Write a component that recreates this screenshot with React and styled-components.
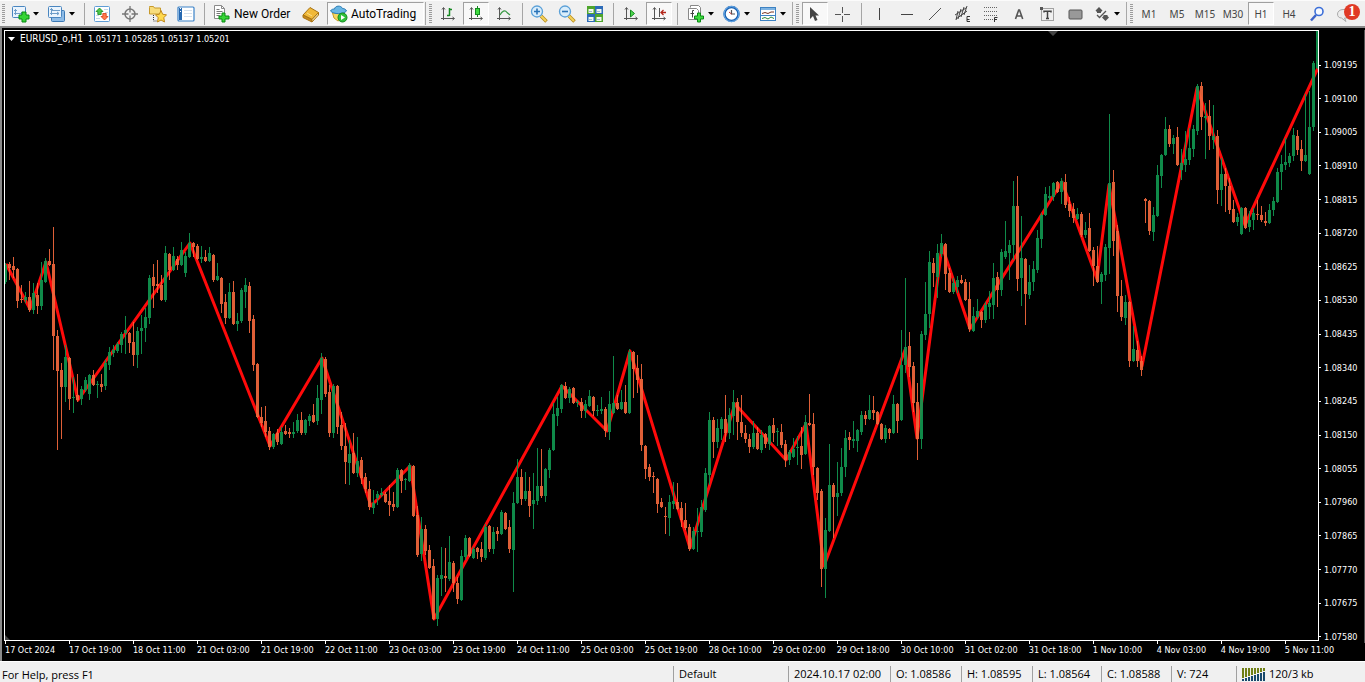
import React from 'react'
import styled, { createGlobalStyle, css } from 'styled-components'


const GlobalStyle = createGlobalStyle`
* {
  box-sizing: border-box;
}

body {
  margin: 0;
  background-color: #f0f0f0;
  font-family: "Open Sans", "Noto Sans", sans-serif;
  color: #000;
}
`

// one candle per entry: direction, then high, body top, body bottom, low
const candleData = `
g263 265 282 284,o262 264 268 280,o257 266 270 278,o268 269 301 308,o285 299 300 303,g292 297 300 303,o281 297 310 312,g283 293 310 314,
o283 295 306 314,g262 280 306 310,g258 261 282 283,o249 261 265 266,o227 264 336 370,o330 336 371 450,o363 370 387 439,g345 357 387 402,
o357 358 399 410,g377 397 398 413,o374 395 400 402,g386 389 399 405,g377 380 390 392,g374 375 394 400,o370 375 385 386,g381 384 385 398,
o374 384 387 392,g360 363 386 390,g347 352 365 370,g345 350 353 357,g342 344 351 353,g332 334 345 353,g316 330 333 354,o332 333 343 353,
o322 342 355 366,g327 331 355 368,g315 328 331 354,g308 317 328 342,g275 278 318 324,o264 277 286 308,o260 284 286 293,o275 285 300 301,
g246 253 300 302,o253 254 270 280,g247 256 270 271,o256 259 265 270,g242 250 265 266,g252 256 273 277,g233 243 257 258,o242 243 247 257,
o244 246 259 260,g246 257 259 263,o250 257 261 262,g247 253 261 262,o254 255 280 282,g263 276 280 281,o277 278 304 313,o294 302 318 324,
g283 292 318 319,o281 292 324 325,g313 321 324 331,g288 290 321 323,g278 285 292 308,o282 286 321 333,o315 319 365 371,o363 364 417 418,
o407 417 423 427,o406 421 432 437,o427 431 447 450,g433 434 447 449,o429 433 442 445,g427 432 444 445,o425 431 434 435,o428 432 434 438,
g422 432 434 438,g414 420 431 433,o412 420 433 435,g419 420 433 435,g414 416 421 426,o404 415 422 423,g385 398 421 425,g353 358 400 414,
o357 359 394 397,o385 392 433 437,g384 386 433 438,o385 386 427 434,o412 425 446 450,o423 446 462 484,g440 454 463 485,o433 453 473 474,
g437 461 473 477,o457 460 478 484,o473 477 489 493,o481 489 507 510,g490 503 508 514,g491 494 498 505,g488 493 495 497,o492 494 502 503,
o485 501 505 516,o492 504 507 511,g468 470 507 508,o469 470 481 493,g478 479 480 490,g463 465 481 482,o465 466 516 517,o506 515 555 557,
g517 529 554 561,o525 529 551 555,o545 550 568 569,o559 566 619 620,g575 578 619 626,g547 575 579 596,o548 576 578 592,g536 562 579 581,
o561 563 583 592,o577 583 599 604,g550 556 600 601,g535 538 557 560,o537 538 556 557,g547 549 558 559,o547 548 552 559,o542 549 557 562,
g524 527 558 560,o525 526 549 552,g527 532 549 554,o527 531 534 541,g510 512 534 535,o512 513 529 530,o520 527 549 553,g492 503 550 592,
g459 477 503 504,o469 477 499 505,g472 491 499 501,o477 491 506 517,g473 500 504 529,g448 486 501 505,o449 486 496 498,g468 469 496 502,
g448 450 470 478,g403 414 450 451,g397 408 416 426,g384 385 409 413,o382 386 398 399,g387 389 398 403,o387 388 403 404,g400 402 403 407,
o398 402 411 418,g400 404 411 418,g390 396 406 407,o396 397 411 416,g405 410 411 416,g397 409 411 414,o407 409 431 437,g391 404 432 440,
g356 403 413 414,o395 403 409 410,g390 402 409 410,o385 402 413 414,g349 352 413 414,o351 352 369 398,o355 368 380 393,o364 379 445 451,
o445 446 469 479,o464 467 477 481,o472 476 477 493,o478 479 504 513,o498 502 507 508,o507 516 517 534,g495 502 518 536,g482 501 504 509,
o483 502 509 510,o502 508 520 527,o503 520 528 530,o524 527 549 551,g527 531 549 550,g508 531 532 552,g500 507 532 537,g468 473 510 512,
g412 420 475 485,o417 420 442 458,g419 428 442 448,g417 419 429 440,o395 419 433 442,g408 415 433 439,g390 402 416 435,o398 402 422 440,
o395 422 433 437,o425 433 439 443,o434 439 447 453,g421 433 447 449,o427 433 449 450,g430 435 450 453,o433 434 444 448,g425 426 444 450,
o418 425 433 442,g428 431 432 446,o424 432 445 448,o440 444 460 467,g450 452 460 465,g438 449 457 458,g436 447 448 465,o427 446 455 469,
g415 422 454 455,o394 423 425 426,o413 424 467 475,o467 468 493 500,o489 491 569 587,g518 530 569 598,g444 485 531 532,o483 485 497 538,
g462 493 497 516,g448 467 493 496,g430 438 467 477,o432 437 440 450,g421 439 441 448,g429 430 441 452,g411 415 432 435,o411 415 419 425,
g395 410 419 420,o396 410 413 420,o411 412 424 425,o423 424 439 440,g425 428 439 443,o428 429 433 439,g395 404 433 434,o403 404 421 433,
g330 365 420 421,g278 347 365 373,o332 346 367 377,o362 366 403 412,o383 402 439 460,g331 334 439 449,g282 314 335 340,g251 262 314 328,
o258 263 273 287,g244 253 277 298,g234 243 254 257,o243 244 274 290,o268 273 292 293,g278 283 292 294,g276 280 287 293,o275 280 283 284,
o279 282 300 301,o282 299 329 332,g307 316 331 332,g299 311 317 319,o311 312 320 328,g302 305 320 323,g291 303 307 319,g263 278 305 319,
o272 277 290 307,g249 252 290 296,g221 251 257 259,g240 245 253 280,g181 206 245 260,o176 206 279 291,g216 258 278 306,o258 259 294 325,
g265 282 295 299,g261 269 282 291,g230 238 270 273,g213 215 239 248,g187 194 215 216,g186 196 198 200,g182 183 197 201,o181 182 192 193,
g178 181 192 204,o174 182 205 208,o197 204 211 217,o203 209 218 223,g208 214 219 220,o212 214 235 237,g222 230 235 238,o213 228 251 252,
o247 250 266 286,o246 266 282 283,g272 274 282 304,g244 247 275 281,g114 183 248 274,o170 182 241 256,o225 231 296 312,o280 296 317 321,
g295 302 318 325,o301 302 361 367,g326 349 361 362,o341 350 361 367,o356 361 370 376,o198 199 201 223,o200 201 231 235,g207 215 232 241,
g165 175 216 217,g154 155 176 188,g117 129 155 156,o125 129 144 147,g135 138 144 154,o127 137 165 166,g149 163 170 180,g131 159 165 172,
g128 148 160 165,g125 129 149 157,g84 86 131 135,o82 86 117 130,g103 116 118 159,o100 116 136 150,g105 136 140 149,o130 136 190 204,
g158 174 190 206,o168 174 186 212,o178 186 210 214,o200 209 222 223,g213 217 222 226,g207 208 234 235,o207 208 228 229,g211 220 227 232,
g208 213 220 230,o200 214 215 220,o206 215 220 222,o212 221 223 226,g204 210 223 224,g197 201 210 216,g168 172 202 203,g155 164 172 190,
g138 162 165 170,g153 156 163 167,g128 135 156 161,o130 136 150 155,o140 149 161 171,g94 155 161 162,g91 127 174 175,g61 63 127 131,
g20 20 68 69`

const candles = candleData.trim().split(/,\s*/).map((entry, index) => {
  const [high, top, bottom, low] = entry.slice(1).split(' ').map(Number)
  return { x: 5 + index * 4, up: entry[0] === 'g', high, top, bottom, low }
})

const zigzag = '6,264 30,309 46,262 78,400 190,243 270,446 322,358 371,506 410,466 434,619 562,386 607,431 630,351 690,548 735,404 786,460 806,424 824,566 905,350 917,438 942,246 970,329 1062,182 1097,279 1109,185 1142,366 1197,88 1245,225 1318,68'

const prices = Array.from({ length: 18 }, (_, index) => ((109195 - index * 95) / 100000).toFixed(5))
const times = [
  '17 Oct 2024', '17 Oct 19:00', '18 Oct 11:00', '21 Oct 03:00', '21 Oct 19:00', '22 Oct 11:00', '23 Oct 03:00',
  '23 Oct 19:00', '24 Oct 11:00', '25 Oct 03:00', '25 Oct 19:00', '28 Oct 10:00', '29 Oct 02:00', '29 Oct 18:00',
  '30 Oct 10:00', '31 Oct 02:00', '31 Oct 18:00', '1 Nov 10:00', '4 Nov 03:00', '4 Nov 19:00', '5 Nov 11:00',
]


const StyledApp = styled.div`
display: flex;
flex-direction: column;
height: 100vh;
overflow: hidden;
`

/* toolbar */
const StyledToolbar = styled.header`
display: flex;
flex: none;
height: 28px;
padding-top: 1px;
background-color: #f0f0f0;
border-top: 1px solid #fbfbfb;
border-bottom: 2px solid #8a8a8a;
white-space: nowrap;
`
const StyledGrip = styled.div`
flex: none;
width: ${({ $first }) => $first ? '8px' : '10px'};
margin-bottom: 1px;
padding: 2px 0 2px ${({ $first }) => $first ? '2px' : '3px'};
${({ $first }) => !$first && css`
  margin-left: 1px;
  width: 9px;
  border-left: 1px solid #a8a8a8;
`}

&::before {
  content: '';
  display: block;
  width: 3px;
  height: 100%;
  background: repeating-linear-gradient(#9c9c9c 0 1px, #f0f0f0 1px 2px);
}
`
const StyledDivider = styled.div`
flex: none;
width: 1px;
margin: 1px ${({ $after }) => $after || '3px'} 1px 4px;
background-color: #a5a5a5;
`
const StyledButton = styled.button`
display: flex;
flex: none;
align-items: center;
justify-content: center;
width: 26px;
height: 23px;
margin: 0 1px;
padding: 0;
border: 1px solid transparent;
background: none;
color: #444;
font: 10px "Noto Sans", sans-serif;

${({ $pressed }) => $pressed && css`
  border-color: #a0a0a0 #fff #fff #a0a0a0;
  background-color: #f8f8f8;
`}
${({ $split }) => $split && css`
  justify-content: flex-start;
  gap: 3px;
  width: 36px;
  margin: 0;
  padding-left: 3px;
`}
`
const StyledTextButton = styled(StyledButton)`
justify-content: flex-start;
gap: 3px;
width: ${({ $width }) => $width};
margin: 0 0 0 ${({ $left }) => $left || '0'};
padding-left: ${({ $pad }) => $pad};
color: #000;
font: 12px Roboto, "Open Sans", sans-serif;
`
const StyledIcon = styled.svg`
flex: none;
display: block;
width: ${({ $wide }) => $wide ? '18px' : '16px'};
height: ${({ $wide }) => $wide ? '18px' : '16px'};
`
const StyledChatButton = styled(StyledButton)`
position: relative;
align-items: flex-end;
justify-content: flex-start;
width: 30px;
margin-left: auto;
`
const StyledBadge = styled.span`
position: absolute;
top: 1px;
right: 3px;
width: 16px;
height: 16px;
border-radius: 8px;
background-color: #e03a26;
color: #fff;
font: bold 14px/16px "Liberation Serif", serif;
text-align: center;
`

/* chart */
const StyledChart = styled.main`
display: grid;
flex: 1;
grid-template-columns: 1fr 46px;
grid-template-rows: 1fr 20px;
min-height: 0;
padding: 2px 0 0 2px;
border-left: 2px solid #8a8a8a;
background-color: #000;
color: #fff;
font: 9px/12px "DejaVu Sans Condensed", "DejaVu Sans", sans-serif;
white-space: nowrap;
`
const StyledPlot = styled.section`
position: relative;
min-height: 0;
border: 1px solid #fff;
`
const StyledPlotSvg = styled.svg`
display: block;
width: 100%;
height: 100%;
`
const StyledTitle = styled.div`
position: absolute;
top: 2px;
left: 3px;
display: flex;
align-items: center;
gap: 5px;
white-space: pre;
`
const StyledSymbol = styled.span`
font-size: 10px;
`
const StyledTitleArrow = styled.svg`
width: 7px;
height: 4px;
`
const StyledPriceAxis = styled.ol`
display: flex;
flex-direction: column;
justify-content: space-between;
margin: 0 0 -2px;
padding: 29px 0 0;
border-right: 1px solid #555;
list-style: none;
`
const StyledPrice = styled.li`
display: flex;
align-items: center;
gap: 3px;

&::before {
  content: '';
  width: 2px;
  height: 1px;
  background-color: #fff;
}
`
const StyledTimeAxis = styled.ol`
display: flex;
margin: 0;
padding: 0 1px;
list-style: none;
`
const StyledTime = styled.li`
flex: none;
width: calc(100% * 64 / 1313);

&::before {
  content: '';
  display: block;
  width: 1px;
  height: 3px;
  background-color: #fff;
}
`

/* status bar */
const StyledStatusBar = styled.footer`
display: flex;
flex: none;
height: 21px;
padding-top: 4px;
border-top: 1px solid #fff;
background-color: #f0f0f0;
font-size: 11px;
line-height: 18px;
white-space: nowrap;
`
const StyledStatus = styled.div`
display: flex;
flex: none;
align-items: center;
gap: 3px;
width: ${({ $width }) => $width};
padding-left: 5px;
border-left: 1px solid #a0a0a0;
`
const StyledHelp = styled.div`
flex: 1;
padding-left: 2px;
`
const StyledSignal = styled.svg`
width: 24px;
height: 13px;
`


const Icon = ({ children, wide }) => (
  <StyledIcon $wide={wide} viewBox={wide ? '0 0 18 18' : '0 0 16 16'} fill="none" aria-hidden="true">
    {children}
  </StyledIcon>
)
const DropArrow = () => (
  <svg width="7" height="4" viewBox="0 0 7 4" aria-hidden="true"><path d="M0 0h6L3 3.500z" fill="#000" /></svg>
)
const Plus = ({ x, y }) => (
  <path
    transform={`translate(${x} ${y})`}
    d="M3.500.5h3v3h3v3h-3v3h-3v-3h-3v-3h3z"
    fill="#3fdc3f"
    stroke="#0a8a14"
  />
)
const Axes = () => (
  <path d="M3.500 2v12M1 12.500h13M2 3.500l1.500-2 1.500 2M12.500 11l2 1.500-2 1.500" stroke="#555" />
)

const NewChartIcon = () => (
  <Icon wide>
    <rect x=".5" y="1.500" width="13" height="11" rx="1" fill="#eaf4fd" stroke="#4a86c0" />
    <path d="M3.500 4v6M2 5.500h3M2 8.500h9M9 7l2 1.500L9 10" stroke="#6d9cc8" />
    <path d="M10 7h4v3h3v4h-3v3h-4v-3H7v-4h3z" fill="#35d435" stroke="#0a8a14" />
  </Icon>
)
const ProfilesIcon = () => (
  <Icon wide>
    <rect x="3.500" y="5.500" width="13" height="11" rx="1" fill="#8dbbe6" stroke="#3b78b4" />
    <rect x=".5" y="1.500" width="13" height="11" rx="1" fill="#eaf4fd" stroke="#4a86c0" />
    <path d="M3.500 3v7M2 4.500h3M2 8.500h9M9 7l2 1.500L9 10M4 5.500h8" stroke="#6d9cc8" />
  </Icon>
)
const MarketWatchIcon = () => (
  <Icon>
    <rect x=".5" y=".5" width="15" height="15" rx="1" fill="#fff" stroke="#5f9dd6" />
    <path d="M10 3.500h4M11 6.500h3M2 9.500h3M2 12.500h4" stroke="#c5d7e8" />
    <path d="M5.500 2l3.500 3.500H7.200v3H3.800v-3H2z" fill="#4cc84c" stroke="#15861c" strokeWidth=".8" />
    <path d="M10.500 14L7 10.500h1.800v-3h3.400v3H14z" fill="#ff7a4a" stroke="#d63a14" strokeWidth=".8" />
  </Icon>
)
const DataWindowIcon = () => (
  <Icon>
    <circle cx="8" cy="8" r="5" stroke="#777" strokeWidth="1.500" />
    <path d="M8 0v6.500M8 9.500V16M0 8h6.500M9.500 8H16" stroke="#777" strokeWidth="1.300" />
  </Icon>
)
const NavigatorIcon = () => (
  <Icon wide>
    <path d="M.5 2.500v-1h4l1 1.500h6v6h-11z" fill="#f8dd7c" stroke="#c79a2c" />
    <path d="M4.500 10v6h3" stroke="#333" strokeDasharray="1 1" />
    <path d="M12 5.500l1.700 3.800 3.800.5-2.700 2.900.7 4.300-3.500-2-3.500 2 .7-4.300L6.500 9.800l3.800-.5z" fill="#ffd94d" stroke="#c28a1c" />
  </Icon>
)
const TerminalIcon = () => (
  <Icon wide>
    <rect x="1" y="2" width="16" height="14" rx="1" fill="#fff" stroke="#3a82c8" strokeWidth="1.200" />
    <path d="M2 3h3v12H2z" fill="#2668b0" />
    <path d="M3 3.500h1M3 6.500h1" stroke="#fff" />
    <path d="M7 5.500h8M7 8.500h8M7 11.500h8" stroke="#d5e1ee" />
  </Icon>
)
const OrderIcon = () => (
  <Icon wide>
    <path d="M1.500.5h7l3 3v10h-10z" fill="#fff" stroke="#8a8a8a" />
    <path d="M8.500.5v3h3" stroke="#8a8a8a" />
    <path d="M3.500 4.500h3M3.500 6.500h6M3.500 8.500h4M3.500 10.500h3" stroke="#777" />
    <path d="M9 8h3v3h4v3h-4v3H9v-3H6v-3h3z" fill="#35d435" stroke="#0a8a14" />
  </Icon>
)
const EditorIcon = () => (
  <Icon wide>
    <path d="M1 10l7-7.500 8.500 5-6.500 7z" fill="#f0b93a" stroke="#a87312" />
    <path d="M1 10l9 4.500v2.500l-9-4.500z" fill="#c98a1c" stroke="#a87312" />
    <path d="M10 14.500l6.500-7v2.500l-6.500 7z" fill="#f7e3a4" stroke="#a87312" />
    <path d="M5 8l5 3" stroke="#fbe08a" />
  </Icon>
)
const AutoTradingIcon = () => (
  <Icon wide>
    <path d="M2.500 8h12l-1.500 5-5 3-4-3z" fill="#f6d65e" stroke="#c59a25" />
    <path d="M.5 6c1-2 3-2 4-2 .5-3.500 6.500-4 8-.5 2 0 3.500 1 4 2.500-3 3.500-13 3.500-16 0z" fill="#69b6e4" stroke="#2c7db5" />
    <circle cx="12.500" cy="12.500" r="4.500" fill="#2fbf3a" stroke="#128a1e" />
    <path d="M11 10v5l4-2.500z" fill="#fff" />
  </Icon>
)
const BarsIcon = () => (
  <Icon><Axes /><path d="M9.500 2v8M7 9.500h2.500M9.500 3.500H12" stroke="#168a22" strokeWidth="1.500" /></Icon>
)
const CandlesIcon = () => (
  <Icon><Axes /><path d="M9.500 0v11" stroke="#168a22" /><rect x="7.500" y="2.500" width="4" height="6" fill="#3fdc3f" stroke="#168a22" /></Icon>
)
const LineIcon = () => (
  <Icon><Axes /><path d="M4 9c2-4 5-5.500 7-2.500L14 9" stroke="#3a9a45" strokeWidth="1.200" /></Icon>
)
const ZoomIcon = ({ plus }) => (
  <Icon wide>
    <path d="M11 11l5.500 5.500" stroke="#b88c1c" strokeWidth="3.500" />
    <path d="M11 11l5 5" stroke="#f5d25a" strokeWidth="2" />
    <circle cx="7" cy="6.500" r="5.500" fill="#d9edfb" stroke="#5aa0d8" strokeWidth="1.300" />
    <path d={plus ? 'M4 6.500h6M7 3.500v6' : 'M4 6.500h6'} stroke="#2b74b8" strokeWidth="1.600" />
  </Icon>
)
const TileIcon = () => (
  <Icon>
    <path d="M0 0h8v8H0zM8 8h8v8H8z" fill="#4ea52c" />
    <path d="M8 0h8v8H8zM0 8h8v8H0z" fill="#2d6bb8" />
    <path d="M1.500 3h5v4h-5zM9.500 3h5v4h-5zM1.500 11h5v4h-5zM9.500 11h5v4h-5z" fill="#f3f8ee" />
    <path d="M2 5.500h3M10 5.500h3M2 13.500h3M10 13.500h3" stroke="#9cbccf" />
  </Icon>
)
const ScrollIcon = () => (
  <Icon><Axes /><path d="M7.500 4v7l4-3.500z" fill="#4fd84f" stroke="#168a22" /></Icon>
)
const ShiftIcon = () => (
  <Icon><Axes /><path d="M8.500 2v9" stroke="#555" /><path d="M10 6.500h5M12.500 4L10 6.500 12.500 9" stroke="#b3261a" strokeWidth="1.300" /></Icon>
)
const IndicatorsIcon = () => (
  <Icon wide>
    <path d="M3.500 2.500v-2h8l2 2v9h-2" fill="#fff" stroke="#888" />
    <path d="M1.500 3.500h8l2 2v9h-10z" fill="#fff" stroke="#888" />
    <path d="M7 5.500H5.500v7M3.500 8.500H7" stroke="#444" />
    <Plus x="7" y="7.500" />
  </Icon>
)
const ClockIcon = () => (
  <Icon wide>
    <circle cx="8.500" cy="9" r="7" fill="#fff" stroke="#1d64b4" strokeWidth="2.500" />
    <circle cx="8.500" cy="9" r="7.500" stroke="#6fb1ec" />
    <path d="M8.500 5v4H12" stroke="#555" strokeWidth="1.200" />
    <path d="M6 7l2.500 2" stroke="#c33" />
  </Icon>
)
const TemplateIcon = () => (
  <Icon wide>
    <rect x="1.500" y="2.500" width="15" height="13" fill="#fff" stroke="#3d82c2" />
    <path d="M2 4h14" stroke="#7db3e2" strokeWidth="2" />
    <path d="M3 8.500l3-1 3 1 3-1.500h3" stroke="#7a3520" />
    <path d="M2 10.500h14" stroke="#3d82c2" />
    <path d="M3 13.500l3-1 3 1.500 3-2 3 1.500" stroke="#2f8a3c" />
  </Icon>
)
const CursorIcon = () => (
  <Icon><path d="M3 1v12l3-3 2 5 2.500-1-2-4.500H12z" fill="#444" /></Icon>
)
const CrosshairIcon = () => (
  <Icon><path d="M7.500 1v6M7.500 10v6M0 8.500h6M9 8.500h6" stroke="#555" /></Icon>
)
const VerticalIcon = () => <Icon><path d="M8.500 2v12" stroke="#444" /></Icon>
const HorizontalIcon = () => <Icon><path d="M2 8.500h12" stroke="#444" /></Icon>
const TrendIcon = () => <Icon><path d="M2 14L14 2" stroke="#555" /></Icon>
const ChannelIcon = () => (
  <Icon wide>
    <path d="M1 10l11-7M2 14l11-8M4 6l-2 9M7 4L4 14M10 2L7 12M13 1l-3 9" stroke="#444" />
    <path d="M16 11.500h-3v5h3M13 14.500h2.500" stroke="#333" />
  </Icon>
)
const FiboIcon = () => (
  <Icon wide>
    <path d="M2 2.500h14M2 6.500h14M2 10.500h14M2 14.500h9" stroke="#666" strokeDasharray="1 1" />
    <path d="M15.500 12.500h-3V17M12.500 14.500H15" stroke="#333" />
  </Icon>
)
const TextIcon = () => (
  <Icon><path d="M4.500 13L7.700 4h.8l3.200 9M5.500 10h5" stroke="#555" strokeWidth="1.600" /></Icon>
)
const LabelIcon = () => (
  <Icon>
    <rect x="2.500" y="2.500" width="12" height="12" stroke="#555" strokeDasharray="1 1" />
    <path d="M1 1h3v3H1z" fill="#555" />
    <path d="M5 6.500V5.200h7v1.300M8.500 5v8M7 12.500h3" stroke="#444" strokeWidth="1.500" />
  </Icon>
)
const ShapeIcon = () => (
  <Icon><rect x="2" y="4" width="13" height="9" rx="1" fill="#999" stroke="#555" /></Icon>
)
const ArrowsIcon = () => (
  <Icon wide>
    <path d="M6 2l3.500 3.500L8 7v1H4V7L2.500 5.500z" fill="#555" />
    <path d="M12.500 16L9 12.500l1.500-1.500v-1h4v1l1.500 1.500z" fill="#555" />
    <path d="M4 10l2.500 2.500L13 6" stroke="#555" strokeWidth="1.300" />
  </Icon>
)
const SearchIcon = () => (
  <Icon>
    <path d="M7 9l-5 5.500" stroke="#3c62c8" strokeWidth="2.500" />
    <circle cx="10" cy="5.500" r="4" fill="#f6f9ff" stroke="#3c6fd8" strokeWidth="1.600" />
  </Icon>
)
const ChatIcon = () => (
  <Icon wide>
    <path d="M8 3.500h4c3 0 5 1.500 5 4s-2 4.500-5 4.500H9.500L11 15.500 6.500 12C4 12 2.500 10.500 2.500 8S5 3.500 8 3.500z" fill="#ececec" stroke="#aaa" />
  </Icon>
)


const ToolButton = ({ label, icon, split, pressed, children }) => (
  <StyledButton type="button" aria-label={label} $split={split} $pressed={pressed}>
    {icon}
    {children}
    {split && <DropArrow />}
  </StyledButton>
)

const timeframes = ['M1', 'M5', 'M15', 'M30', 'H1', 'H4']
const Toolbar = () => {
  return (
    <StyledToolbar>
      <StyledGrip $first />
      <ToolButton label="New chart" icon={<NewChartIcon />} split />
      <ToolButton label="Profiles" icon={<ProfilesIcon />} split />
      <StyledDivider />
      <ToolButton label="Market watch" icon={<MarketWatchIcon />} />
      <ToolButton label="Data window" icon={<DataWindowIcon />} />
      <ToolButton label="Navigator" icon={<NavigatorIcon />} />
      <ToolButton label="Terminal" icon={<TerminalIcon />} />
      <StyledDivider />
      <StyledTextButton type="button" $width="89px" $pad="4px"><OrderIcon />New Order</StyledTextButton>
      <ToolButton label="MetaEditor" icon={<EditorIcon />} />
      <StyledTextButton type="button" $width="97px" $left="2px" $pad="2px" $pressed><AutoTradingIcon />AutoTrading</StyledTextButton>
      <StyledGrip />
      <ToolButton label="Bar chart" icon={<BarsIcon />} />
      <ToolButton label="Candlesticks" icon={<CandlesIcon />} pressed />
      <ToolButton label="Line chart" icon={<LineIcon />} />
      <StyledDivider $after="2px" />
      <ToolButton label="Zoom in" icon={<ZoomIcon plus />} />
      <ToolButton label="Zoom out" icon={<ZoomIcon />} />
      <ToolButton label="Tile windows" icon={<TileIcon />} />
      <StyledDivider />
      <ToolButton label="Auto scroll" icon={<ScrollIcon />} />
      <ToolButton label="Chart shift" icon={<ShiftIcon />} pressed />
      <StyledDivider $after="5px" />
      <ToolButton label="Indicators" icon={<IndicatorsIcon />} split />
      <ToolButton label="Periods" icon={<ClockIcon />} split />
      <ToolButton label="Templates" icon={<TemplateIcon />} split />
      <StyledGrip />
      <ToolButton label="Cursor" icon={<CursorIcon />} pressed />
      <ToolButton label="Crosshair" icon={<CrosshairIcon />} />
      <StyledDivider />
      <ToolButton label="Vertical line" icon={<VerticalIcon />} />
      <ToolButton label="Horizontal line" icon={<HorizontalIcon />} />
      <ToolButton label="Trendline" icon={<TrendIcon />} />
      <ToolButton label="Channel" icon={<ChannelIcon />} />
      <ToolButton label="Fibonacci" icon={<FiboIcon />} />
      <ToolButton label="Text" icon={<TextIcon />} />
      <ToolButton label="Text label" icon={<LabelIcon />} />
      <ToolButton label="Rectangle" icon={<ShapeIcon />} />
      <ToolButton label="Arrows" icon={<ArrowsIcon />} split />
      <StyledGrip />
      {timeframes.map((item) => <ToolButton key={item} pressed={item === 'H1'}>{item}</ToolButton>)}
      <ToolButton label="Search" icon={<SearchIcon />} />
      <StyledChatButton type="button">
        <ChatIcon />
        <StyledBadge>1</StyledBadge>
      </StyledChatButton>
    </StyledToolbar>
  )
}

const Candle = ({ x, up, high, top, bottom, low }) => (
  <g fill={up ? '#119650' : '#f2683c'}>
    <rect x={x} y={high} width="1" height={low - high} />
    <rect x={x - 1} y={top} width="3" height={bottom - top} />
  </g>
)

const Chart = () => {
  return (
    <StyledChart>
      <StyledPlot>
        <StyledPlotSvg viewBox="5 31 1313 609" preserveAspectRatio="none" role="img" aria-label="EURUSD hourly chart">
          <path d="M1048 31h10l-5 5zM5 635l5 5H5z" fill="#444" />
          <polyline points={zigzag} fill="none" stroke="#ff0a0a" strokeWidth="3" strokeLinejoin="round" />
          <g shapeRendering="crispEdges" opacity=".92">
            {candles.map((item) => <Candle key={item.x} {...item} />)}
          </g>
        </StyledPlotSvg>
        <StyledTitle>
          <StyledTitleArrow viewBox="0 0 7 4"><path d="M0 0h7L3.500 4z" fill="#fff" /></StyledTitleArrow>
          <StyledSymbol>EURUSD_o,H1</StyledSymbol>
          <span>1.05171 1.05285 1.05137 1.05201</span>
        </StyledTitle>
      </StyledPlot>
      <StyledPriceAxis>
        {prices.map((item) => <StyledPrice key={item}>{item}</StyledPrice>)}
      </StyledPriceAxis>
      <StyledTimeAxis>
        {times.map((item) => <StyledTime key={item}>{item}</StyledTime>)}
      </StyledTimeAxis>
    </StyledChart>
  )
}

const Signal = () => (
  <StyledSignal viewBox="0 0 24 13" shapeRendering="crispEdges" aria-hidden="true">
    {Array.from({ length: 8 }, (_, index) => (
      <g key={index}>
        <rect x={index * 3} y="0" width="2" height={10 - index} fill="#6f7f14" />
        <rect x={index * 3} y={11 - index} width="2" height={2 + index} fill="#17486c" />
      </g>
    ))}
  </StyledSignal>
)

const StatusBar = () => {
  return (
    <StyledStatusBar>
      <StyledHelp>For Help, press F1</StyledHelp>
      <StyledStatus $width="115px">Default</StyledStatus>
      <StyledStatus $width="102px">2024.10.17 02:00</StyledStatus>
      <StyledStatus $width="71px">O: 1.08586</StyledStatus>
      <StyledStatus $width="71px">H: 1.08595</StyledStatus>
      <StyledStatus $width="69px">L: 1.08564</StyledStatus>
      <StyledStatus $width="70px">C: 1.08588</StyledStatus>
      <StyledStatus $width="65px">V: 724</StyledStatus>
      <StyledStatus $width="129px"><Signal />120/3 kb</StyledStatus>
    </StyledStatusBar>
  )
}

const App = () => {
  return (
    <StyledApp>
      <GlobalStyle />
      <Toolbar />
      <Chart />
      <StatusBar />
    </StyledApp>
  )
}

export default App
